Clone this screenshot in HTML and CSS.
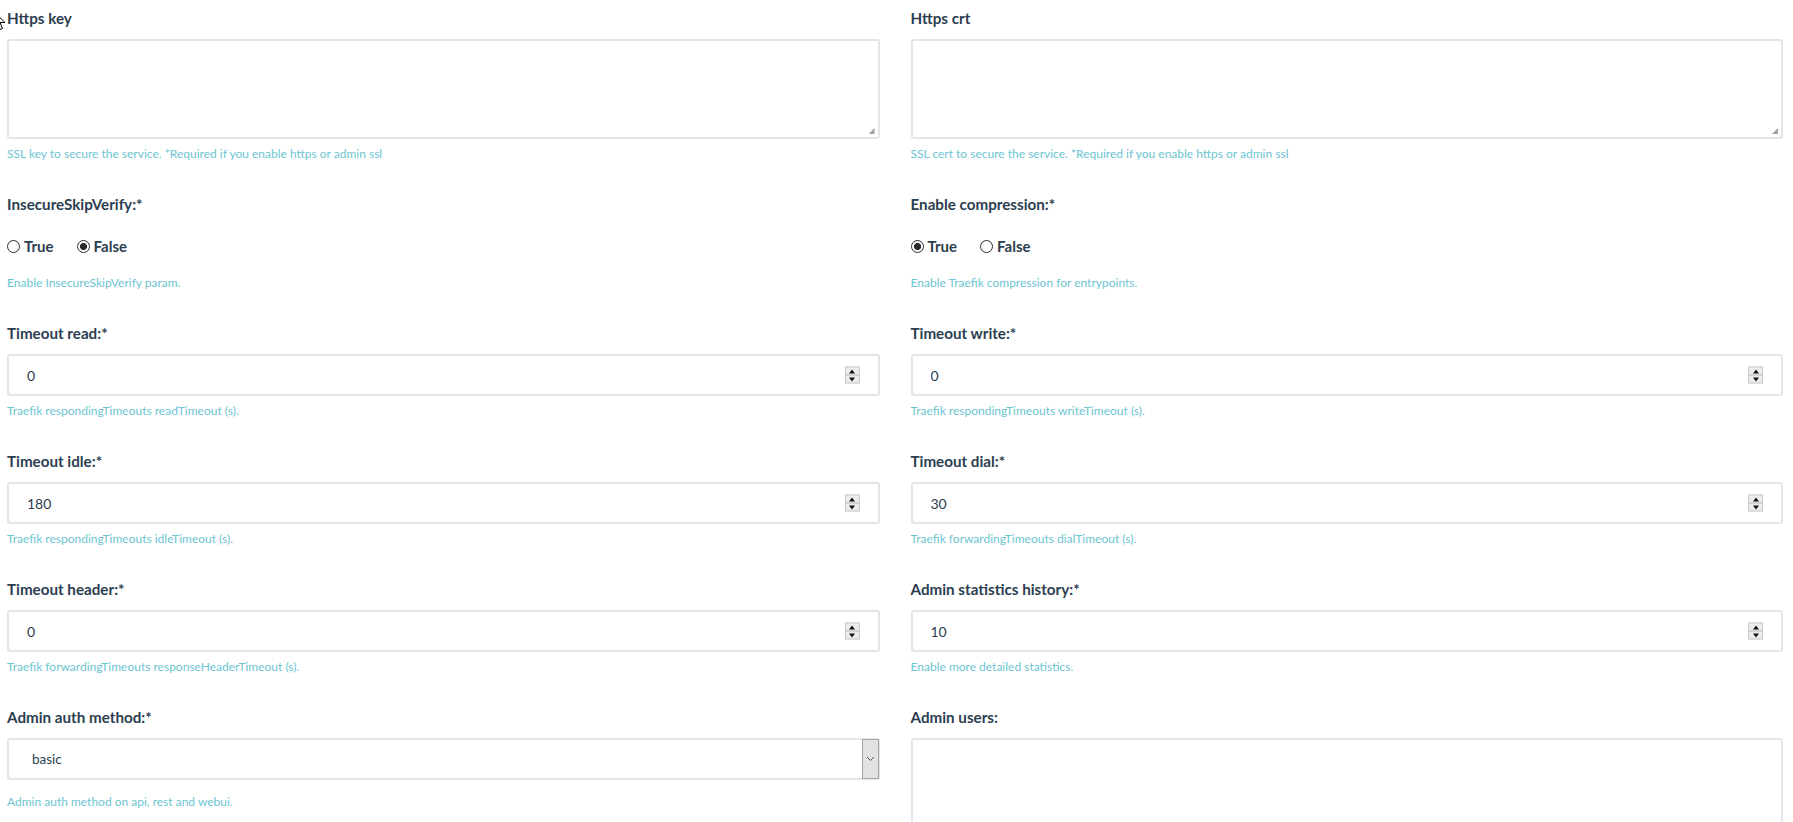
FILE: index.html
```html
<!DOCTYPE html>
<html lang="en">
<head>
<meta charset="utf-8">
<title>Traefik settings</title>
<link rel="stylesheet" href="styles.css">
</head>
<body>
<svg class="cursor" width="14" height="20" viewBox="0 0 14 20" aria-hidden="true"><path d="M1 1 L1 16 L4.5 12.5 L7 18.5 L9.5 17.5 L7 11.5 L12 11.5 Z" fill="#fff" stroke="#000" stroke-width="1"/></svg>
<main class="form-grid">
  <div class="field">
    <label class="field-label">Https key</label>
    <div class="area-wrap">
      <textarea class="area area-ssl"></textarea>
      <span class="grip"></span>
    </div>
    <p class="help">SSL key to secure the service. *Required if you enable https or admin ssl</p>
  </div>
  <div class="field">
    <label class="field-label">Https crt</label>
    <div class="area-wrap">
      <textarea class="area area-ssl"></textarea>
      <span class="grip"></span>
    </div>
    <p class="help">SSL cert to secure the service. *Required if you enable https or admin ssl</p>
  </div>

  <div class="field">
    <label class="field-label">InsecureSkipVerify:*</label>
    <div class="radios">
      <label class="radio"><input type="radio" name="insecure"><span>True</span></label>
      <label class="radio"><input type="radio" name="insecure" checked><span>False</span></label>
    </div>
    <p class="help">Enable InsecureSkipVerify param.</p>
  </div>
  <div class="field">
    <label class="field-label">Enable compression:*</label>
    <div class="radios">
      <label class="radio"><input type="radio" name="compress" checked><span>True</span></label>
      <label class="radio"><input type="radio" name="compress"><span>False</span></label>
    </div>
    <p class="help">Enable Traefik compression for entrypoints.</p>
  </div>

  <div class="field">
    <label class="field-label">Timeout read:*</label>
    <div class="num-wrap"><input class="num" type="text" value="0"><span class="spin"><span class="up"></span><span class="down"></span></span></div>
    <p class="help">Traefik respondingTimeouts readTimeout (s).</p>
  </div>
  <div class="field">
    <label class="field-label">Timeout write:*</label>
    <div class="num-wrap"><input class="num" type="text" value="0"><span class="spin"><span class="up"></span><span class="down"></span></span></div>
    <p class="help">Traefik respondingTimeouts writeTimeout (s).</p>
  </div>

  <div class="field">
    <label class="field-label">Timeout idle:*</label>
    <div class="num-wrap"><input class="num" type="text" value="180"><span class="spin"><span class="up"></span><span class="down"></span></span></div>
    <p class="help">Traefik respondingTimeouts idleTimeout (s).</p>
  </div>
  <div class="field">
    <label class="field-label">Timeout dial:*</label>
    <div class="num-wrap"><input class="num" type="text" value="30"><span class="spin"><span class="up"></span><span class="down"></span></span></div>
    <p class="help">Traefik forwardingTimeouts dialTimeout (s).</p>
  </div>

  <div class="field">
    <label class="field-label">Timeout header:*</label>
    <div class="num-wrap"><input class="num" type="text" value="0"><span class="spin"><span class="up"></span><span class="down"></span></span></div>
    <p class="help">Traefik forwardingTimeouts responseHeaderTimeout (s).</p>
  </div>
  <div class="field">
    <label class="field-label">Admin statistics history:*</label>
    <div class="num-wrap"><input class="num" type="text" value="10"><span class="spin"><span class="up"></span><span class="down"></span></span></div>
    <p class="help">Enable more detailed statistics.</p>
  </div>

  <div class="field">
    <label class="field-label">Admin auth method:*</label>
    <div class="select-wrap">
      <select class="select"><option>basic</option><option>digest</option></select>
      <span class="select-arrow"><svg width="9" height="6" viewBox="0 0 9 6"><path d="M1 1 L4.5 4.5 L8 1" fill="none" stroke="#555" stroke-width="1"/></svg></span>
    </div>
    <p class="help help-select">Admin auth method on api, rest and webui.</p>
  </div>
  <div class="field">
    <label class="field-label">Admin users:</label>
    <div class="area-wrap">
      <textarea class="area area-users"></textarea>
    </div>
  </div>
</main>
</body>
</html>
```

FILE: styles.css
```css
html {
  overflow: hidden;
}

body {
  margin: 0;
  background: #ffffff;
  font-family: Lato, "Open Sans", "Liberation Sans", sans-serif;
  color: #2c3e50;
  position: relative;
}

.cursor {
  position: absolute;
  left: -7px;
  top: 11px;
  z-index: 5;
}

.form-grid {
  display: grid;
  grid-template-columns: 1fr 1fr;
  column-gap: 31px;
  padding: 7px 10px 0 7px;
}

.field {
  display: flex;
  flex-direction: column;
  align-items: stretch;
  padding-bottom: 31px;
}

.field-label {
  display: block;
  font-size: 15.2px;
  font-weight: 700;
  line-height: 22px;
  margin-bottom: 10px;
}

.help {
  margin: 6px 0 0;
  font-size: 12px;
  line-height: 17px;
  color: #6cc5d2;
}

.help-select {
  margin-top: 13px;
}

.area-wrap,
.num-wrap,
.select-wrap {
  position: relative;
}

.area {
  display: block;
  width: 100%;
  box-sizing: border-box;
  border: 2px solid #e3e6e6;
  border-radius: 3px;
  resize: none;
  outline: none;
  font-family: inherit;
  font-size: 15px;
  padding: 8px 18px;
}

.area-ssl {
  height: 100px;
}

.area-users {
  height: 160px;
}

.grip {
  position: absolute;
  right: 5px;
  bottom: 5px;
  width: 6px;
  height: 6px;
  background:
    radial-gradient(circle, #9a9a9a 0.7px, transparent 0.8px) 0 0 / 2px 2px;
  clip-path: polygon(100% 0, 100% 100%, 0 100%);
}

.num,
.select {
  display: block;
  width: 100%;
  height: 42px;
  box-sizing: border-box;
  border: 2px solid #e3e6e6;
  border-radius: 3px;
  outline: none;
  background: #ffffff;
  font-family: inherit;
  font-size: 14px;
  color: #2c3e50;
  padding: 0 18px;
}

.select {
  appearance: none;
  -webkit-appearance: none;
  padding-left: 23px;
  font-size: 13.5px;
}

.spin {
  position: absolute;
  right: 20px;
  top: 50%;
  transform: translateY(-50%);
  width: 15px;
  height: 17px;
  box-sizing: border-box;
  border: 1px solid #c9c9c9;
  background: #ececec;
  display: flex;
  flex-direction: column;
}

.spin .up,
.spin .down {
  flex: 1;
  display: flex;
  align-items: center;
  justify-content: center;
}

.spin .up {
  border-bottom: 1px solid #b5b5b5;
}

.spin .up::before {
  content: "";
  border-left: 3.5px solid transparent;
  border-right: 3.5px solid transparent;
  border-bottom: 4px solid #111;
}

.spin .down::before {
  content: "";
  border-left: 3.5px solid transparent;
  border-right: 3.5px solid transparent;
  border-top: 4px solid #111;
}

.select-arrow {
  position: absolute;
  right: 1px;
  top: 1px;
  bottom: 1px;
  width: 17px;
  box-sizing: border-box;
  border: 1px solid #a6a6a6;
  background: #e2e2e2;
  display: flex;
  align-items: center;
  justify-content: center;
  pointer-events: none;
}

.radios {
  display: flex;
  gap: 23px;
  margin: 10px 0 11px;
  height: 22px;
  align-items: center;
}

.radio {
  display: flex;
  align-items: center;
  gap: 4px;
  font-size: 15px;
  font-weight: 700;
}

.radio input {
  appearance: none;
  -webkit-appearance: none;
  margin: 0;
  width: 13px;
  height: 13px;
  border: 1px solid #2b2b2b;
  border-radius: 50%;
  background: #ffffff;
}

.radio input:checked {
  background: radial-gradient(circle, #2b2b2b 0 3.3px, #ffffff 3.8px);
}
```
